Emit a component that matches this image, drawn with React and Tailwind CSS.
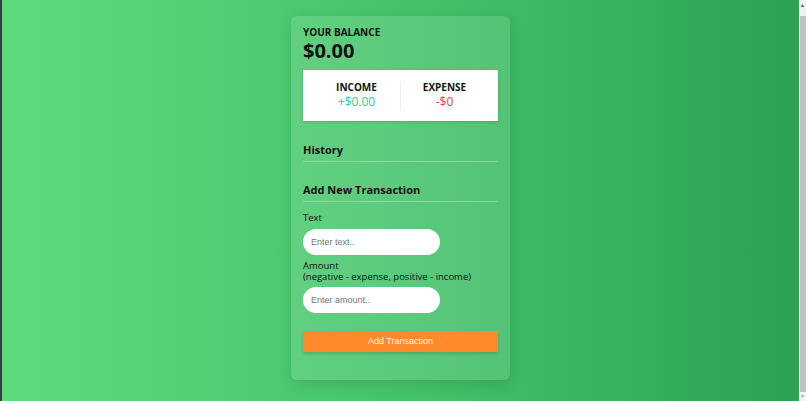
import React from "react";

const font = { fontFamily: "'Open Sans', sans-serif" };
const arial = { fontFamily: "'Liberation Sans', Arial, sans-serif" };

const Scrollbar = () => (
  <div className="w-[7px] h-full bg-[#f1f1f1] flex flex-col items-center">
    <div className="h-[16px] flex items-start pt-[3px] text-[#505050] text-[5px] leading-none">▲</div>
    <div className="flex-1 w-[6px] bg-[#c1c1c1]"></div>
    <div className="h-[9px] flex items-end pb-[2px] text-[#a3a3a3] text-[5px] leading-none">▼</div>
  </div>
);

const App = () => {
  return (
    <div className="flex h-[401px] w-[806px] overflow-hidden">
      <div className="w-[2px] bg-[#3d3a38]"></div>
      <div
        className="flex-1 flex justify-center bg-[linear-gradient(90deg,#5cdc7e_0%,#45c36a_50%,#2aa353_100%)] pt-[16px]"
        style={font}
      >
        {/* Expense tracker card */}
        <div className="w-[219px] h-[364px] rounded-[6px] bg-white/[0.12] shadow-[0_4px_14px_rgba(0,0,0,0.12)] px-[12px] pt-[9px] text-[#111]">
          <h4 className="text-[10px] font-bold leading-[14px]">YOUR BALANCE</h4>
          <h1 className="text-[20px] font-bold leading-[24px]">$0.00</h1>

          <div className="mt-[7px] h-[51px] px-[10px] bg-white shadow-[0_1px_3px_rgba(0,0,0,0.15)] flex items-center">
            <div className="flex-1 flex flex-col items-center">
              <h4 className="text-[10px] font-bold leading-[13px]">INCOME</h4>
              <p className="text-[12px] leading-[16px] text-[#2ecf94]">+$0.00</p>
            </div>
            <div className="w-px h-[28px] bg-[#eee]"></div>
            <div className="flex-1 flex flex-col items-center">
              <h4 className="text-[10px] font-bold leading-[13px]">EXPENSE</h4>
              <p className="text-[12px] leading-[16px] text-[#d8434f]">-$0</p>
            </div>
          </div>

          <h3 className="mt-[22px] text-[11px] font-bold leading-[14px]">History</h3>
          <div className="mt-[4px] h-px bg-white/30"></div>

          <h3 className="mt-[21px] text-[11px] font-bold leading-[14px]">Add New Transaction</h3>
          <div className="mt-[4px] h-px bg-white/30"></div>

          <form className="mt-[10px]">
            <label className="block text-[9.5px] leading-[12px]">Text</label>
            <input
              type="text"
              placeholder="Enter text.."
              className="mt-[5px] w-[137px] h-[26px] rounded-full bg-white px-[8px] text-[9px] outline-none placeholder:text-[#757575]"
              style={arial}
            />
            <label className="block mt-[5px] text-[9.5px] leading-[11px]">
              Amount
              <br />
              (negative - expense, positive - income)
            </label>
            <input
              type="number"
              placeholder="Enter amount.."
              className="mt-[5px] w-[137px] h-[26px] rounded-full bg-white px-[8px] text-[9px] outline-none placeholder:text-[#757575]"
              style={arial}
            />
            <button
              type="button"
              className="mt-[18px] block w-full h-[21px] bg-[#ff8a2b] text-white/95 text-[9px] shadow-[0_2px_3px_rgba(0,0,0,0.15)]"
              style={arial}
            >
              Add Transaction
            </button>
          </form>
        </div>
      </div>
      <Scrollbar />
    </div>
  );
};

export default App;
